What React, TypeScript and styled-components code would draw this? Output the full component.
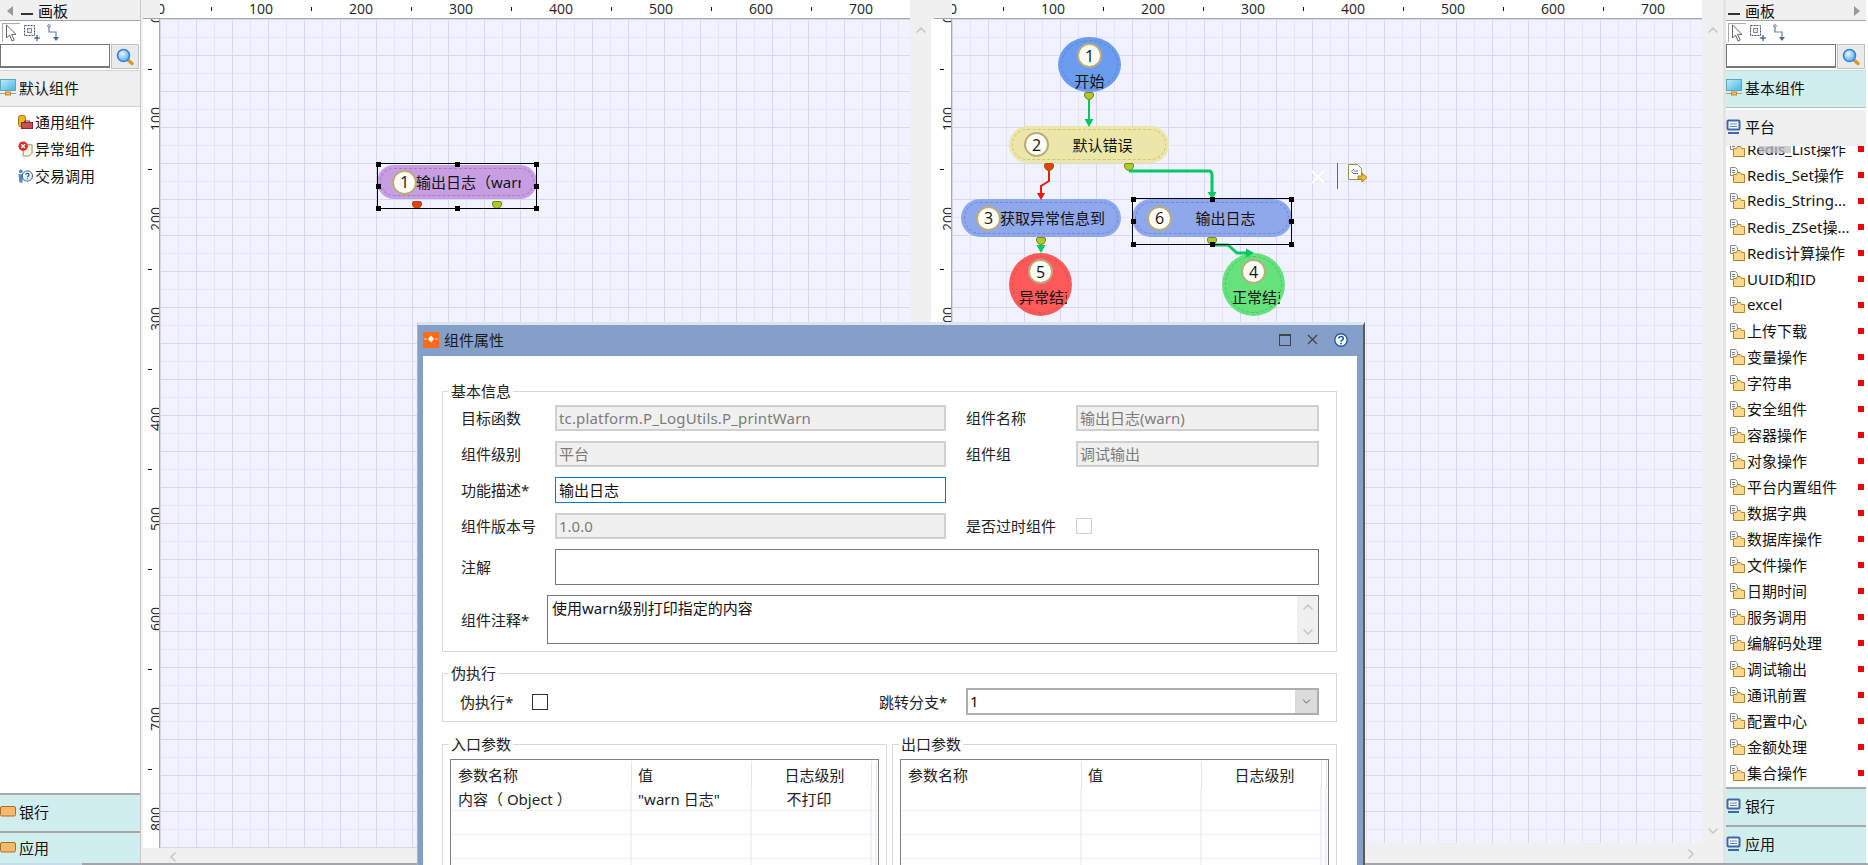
import React from "react";
import styled, { createGlobalStyle } from "styled-components";
import { ChevronDown, ChevronLeft, ChevronRight, ChevronUp } from "lucide-react";

const GlobalStyle = createGlobalStyle`
  html, body {
    margin: 0;
    padding: 0;
    background: #ffffff;
  }
  * {
    box-sizing: border-box;
  }
`;

const FONT = `"Noto Sans", "Noto Sans CJK SC", sans-serif`;

const Screen = styled.div`
  position: relative;
  display: flex;
  width: 1868px;
  height: 865px;
  overflow: hidden;
  font-family: ${FONT};
  font-size: 15px;
  color: #111;
  background: #ffffff;
`;

const WindowEdge = styled.div`
  position: absolute;
  left: 0;
  right: 0;
  bottom: 0;
  height: 2px;
  background: linear-gradient(to right, #c8dcec 82px, #a2a6aa 82px);
`;

/* ---------- palette ---------- */

const Palette = styled.aside<{ $width: number; $right?: boolean }>`
  display: flex;
  flex-direction: column;
  flex: none;
  width: ${(p) => p.$width}px;
  height: 865px;
  background: #fff;
  ${(p) =>
    p.$right
      ? `border-left: 3px solid #e4e4e4; padding-right: 2px; padding-bottom: 2px;`
      : `border-right: 1px solid #c8c8c8;`}
`;

const PaletteHead = styled.div`
  display: flex;
  align-items: center;
  gap: 5px;
  flex: none;
  height: 21px;
  padding: 2px 6px 0 2px;
  background: #f0f0f0;
  border-bottom: 1px solid #a6a6a6;
  line-height: 19px;
`;

const Minimize = styled.span`
  width: 12px;
  height: 2px;
  margin-top: 6px;
  background: #333;
`;

const CollapseArrow = styled.span<{ $dir: "left" | "right" }>`
  flex: none;
  width: 0;
  height: 0;
  ${(p) => (p.$dir === "right" ? "margin-left: auto;" : "margin: 0 3px 0 5px;")}
  border-top: 5px solid transparent;
  border-bottom: 5px solid transparent;
  ${(p) => (p.$dir === "right" ? "border-left: 6px solid #999;" : "border-right: 6px solid #999;")}
`;

const ToolRow = styled.div`
  display: flex;
  align-items: center;
  gap: 3px;
  flex: none;
  height: 23px;
  padding: 0 0 0 2px;
`;

const ToolButton = styled.span<{ $on?: boolean }>`
  display: flex;
  align-items: center;
  justify-content: center;
  width: 18px;
  height: 19px;
  ${(p) => p.$on && "border-top: 1px solid #aaa; border-left: 1px solid #aaa;"}
`;

const SearchRow = styled.div`
  display: flex;
  flex: none;
  gap: 1px;
  height: 27px;
  border-bottom: 1px solid #d4d4d4;
`;

const SearchInput = styled.div`
  width: 110px;
  height: 24px;
  border: 1px solid #777;
  border-bottom-width: 2px;
  border-right-width: 1px;
  background: #fff;
`;

const SearchButton = styled.div`
  display: flex;
  align-items: center;
  justify-content: center;
  width: 28px;
  height: 25px;
  background: #eaeaea;
  border: 1px solid #c0c0c0;
`;

const Drawer = styled.div<{ $open?: boolean; $height: number; $rule?: boolean }>`
  display: flex;
  align-items: center;
  gap: 3px;
  flex: none;
  height: ${(p) => p.$height}px;
  padding-bottom: 3px;
  background: ${(p) => (p.$open ? "#d0eeee" : "#efefef")};
  ${(p) => p.$rule && "border-top: 2px solid #a8a8a8;"}
`;

const DrawerGap = styled.div`
  flex: none;
  height: 3px;
  background: #fff;
  border-top: 1px solid #b8b8b8;
`;

const PlainRule = styled.div`
  flex: none;
  height: 1px;
  background: #d0d0d0;
`;

const TreeList = styled.div`
  flex: 1;
  min-height: 0;
  padding-top: 1px;
`;

const TreeItem = styled.div`
  display: flex;
  align-items: center;
  gap: 2px;
  height: 27px;
  padding-left: 18px;
  svg {
    flex: none;
    width: 15px;
  }
`;

const FolderList = styled.div`
  position: relative;
  flex: 1;
  min-height: 0;
  overflow: hidden;
`;

const FolderRows = styled.div`
  margin-top: -10px;
`;

const FolderRow = styled.div`
  display: flex;
  align-items: center;
  gap: 2px;
  height: 26px;
  padding-left: 4px;
  white-space: nowrap;
`;

const FolderName = styled.span`
  margin-top: -2px;
`;

const RedFlag = styled.span`
  flex: none;
  width: 6px;
  height: 6px;
  margin-left: auto;
  margin-right: 2px;
  background: #f00000;
`;

const ListShade = styled.div`
  position: absolute;
  left: 33px;
  top: 0;
  width: 32px;
  height: 7px;
  background: rgba(190, 190, 190, 0.75);
`;

/* ---------- canvas panes ---------- */

const Pane = styled.section<{ $width: number; $rulerW: number; $barH: number }>`
  display: grid;
  flex: none;
  width: ${(p) => p.$width}px;
  height: 865px;
  grid-template-columns: ${(p) => p.$rulerW}px 750px 21px;
  grid-template-rows: 19px 1fr ${(p) => p.$barH}px;
  background: #f0f0f0;
`;

const Corner = styled.div<{ $inset: number }>`
  margin-left: ${(p) => p.$inset}px;
  background: #f0f0f0;
  border-bottom: 1px solid #a8a8a8;
`;

const RulerTop = styled.div`
  position: relative;
  overflow: hidden;
  background: #fff;
  border-bottom: 1px solid #a8a8a8;
`;

const RulerLeft = styled.div<{ $inset: number }>`
  position: relative;
  overflow: hidden;
  margin-left: ${(p) => p.$inset}px;
  background: #fff;
  border-right: 1px solid #a8a8a8;
`;

const TopLabel = styled.span<{ $at: number }>`
  position: absolute;
  top: 0;
  left: ${(p) => p.$at + 1}px;
  transform: translateX(-50%);
  font: 14px/17px "Open Sans", sans-serif;
  color: #222;
`;

const TopTick = styled.span<{ $at: number }>`
  position: absolute;
  top: 7px;
  left: ${(p) => p.$at + 1}px;
  width: 1px;
  height: 4px;
  background: #111;
`;

const SideLabel = styled.span<{ $at: number }>`
  position: absolute;
  left: calc(100% - 4px);
  top: ${(p) => p.$at}px;
  transform: translate(-50%, -50%) rotate(-90deg);
  font: 14px/17px "Open Sans", sans-serif;
  color: #222;
`;

const SideTick = styled.span<{ $at: number }>`
  position: absolute;
  right: 7px;
  top: ${(p) => p.$at}px;
  width: 4px;
  height: 1px;
  background: #111;
`;

const Canvas = styled.div`
  position: relative;
  overflow: hidden;
  background-color: #f0f2ff;
  background-image: linear-gradient(to right, #d6d7f6 1px, transparent 1px),
    linear-gradient(to bottom, #d6d7f6 1px, transparent 1px),
    linear-gradient(to right, #e3e5fb 1px, transparent 1px),
    linear-gradient(to bottom, #e3e5fb 1px, transparent 1px);
  background-size: 36px 36px, 36px 36px, 18px 18px, 18px 18px;
`;

const VScroll = styled.div`
  grid-column: 3;
  grid-row: 1 / 3;
  display: flex;
  flex-direction: column;
  align-items: center;
  justify-content: space-between;
  padding: 22px 0 4px;
  color: #c8c8c8;
`;

const HScroll = styled.div<{ $end?: boolean }>`
  grid-column: 1 / 4;
  display: flex;
  align-items: center;
  padding: 0 24px;
  justify-content: ${(p) => (p.$end ? "flex-end" : "flex-start")};
  color: #c8c8c8;
`;

const Wires = styled.svg`
  position: absolute;
  left: 0;
  top: 0;
  width: 100%;
  height: 100%;
  pointer-events: none;
`;

const Pill = styled.div<{ $x: number; $y: number; $h: number; $bg: string; $dash: string }>`
  position: absolute;
  left: ${(p) => p.$x}px;
  top: ${(p) => p.$y}px;
  display: flex;
  align-items: center;
  width: 160px;
  height: ${(p) => p.$h}px;
  padding-left: 15px;
  border-radius: ${(p) => p.$h / 2}px;
  background: ${(p) => p.$bg};
  &::before {
    content: "";
    position: absolute;
    inset: 3px;
    border: 1px dashed ${(p) => p.$dash};
    border-radius: ${(p) => p.$h / 2 - 3}px;
  }
`;

const PillLabel = styled.span<{ $nudge?: number }>`
  position: relative;
  flex: none;
  width: 105px;
  margin-left: -1px;
  padding-left: ${(p) => p.$nudge ?? 0}px;
  overflow: hidden;
  white-space: nowrap;
  text-align: center;
  line-height: 20px;
`;

const Round = styled.div<{ $x: number; $y: number; $h: number; $bg: string; $dash: string }>`
  position: absolute;
  left: ${(p) => p.$x}px;
  top: ${(p) => p.$y}px;
  display: flex;
  flex-direction: column;
  align-items: center;
  gap: 3px;
  width: 63px;
  height: ${(p) => p.$h}px;
  padding-top: 6px;
  border-radius: 50%;
  background: ${(p) => p.$bg};
  &::before {
    content: "";
    position: absolute;
    inset: 3px;
    border: 1px dashed ${(p) => p.$dash};
    border-radius: 50%;
  }
`;

const RoundLabel = styled.span<{ $clip?: boolean }>`
  position: relative;
  display: block;
  width: 48px;
  ${(p) => p.$clip && "margin-left: 5px;"}
  overflow: hidden;
  white-space: nowrap;
  text-align: center;
  line-height: 20px;
`;

const Badge = styled.span`
  position: relative;
  flex: none;
  display: flex;
  align-items: center;
  justify-content: center;
  width: 25px;
  height: 25px;
  border-radius: 50%;
  background: #fffff6;
  border: 2px solid #b9ad7c;
  font: 16px/1 "Open Sans", sans-serif;
  color: #111;
`;

const Port = styled.span<{ $x: number; $y: number; $kind: "ok" | "err" }>`
  position: absolute;
  left: ${(p) => p.$x}px;
  top: ${(p) => p.$y}px;
  width: 10px;
  height: 8px;
  border-radius: 2px 2px 5px 5px;
  background: ${(p) => (p.$kind === "ok" ? "#a8cc20" : "#e04400")};
  border: 1px solid ${(p) => (p.$kind === "ok" ? "#8a7a30" : "#a8501c")};
`;

const SelectBox = styled.div<{ $x: number; $y: number; $w: number; $h: number }>`
  position: absolute;
  left: ${(p) => p.$x}px;
  top: ${(p) => p.$y}px;
  width: ${(p) => p.$w}px;
  height: ${(p) => p.$h}px;
  border: 1px solid #000;
`;

const Handle = styled.span<{ $left: string; $top: string }>`
  position: absolute;
  left: ${(p) => p.$left};
  top: ${(p) => p.$top};
  width: 5px;
  height: 5px;
  margin: -2.5px 0 0 -2.5px;
  background: #000;
`;

/* ---------- dialog ---------- */

const Dialog = styled.div`
  position: absolute;
  left: 417px;
  top: 322px;
  display: flex;
  flex-direction: column;
  width: 948px;
  height: 543px;
  padding: 0 6px;
  background: #84a0c8;
  border-top: 3px solid #dce4f0;
  border-left: 1px solid #a8b4c4;
  border-right: 2px solid #5a5a5a;
`;

const TitleBar = styled.div`
  display: flex;
  align-items: center;
  gap: 5px;
  flex: none;
  height: 31px;
  padding: 0 9px 2px 0;
  margin-left: -1px;
`;

const TitleText = styled.span`
  line-height: 20px;
  color: #1a1a1a;
`;

const TitleActions = styled.div`
  display: flex;
  align-items: center;
  gap: 16px;
  margin-left: auto;
`;

const DialogBody = styled.div`
  flex: 1;
  min-height: 0;
  overflow: hidden;
  padding: 25px 20px 0 19px;
  margin-left: -1px;
  background: #fff;
`;

const Group = styled.fieldset<{ $gapTop?: number }>`
  min-width: 0;
  margin: ${(p) => p.$gapTop ?? 0}px 0 0;
  padding: 0;
  border: 1px solid #d8d8d8;
`;

const GroupTitle = styled.legend`
  margin-left: 6px;
  padding: 0 2px;
  line-height: 20px;
  color: #222;
`;

const InfoGrid = styled.div`
  display: grid;
  grid-template-columns: 94px 391px 130px 243px;
  grid-template-rows: 26px 26px 26px 26px 36px 49px;
  row-gap: 10px;
  padding: 4px 0 7px 17px;
  margin-left: 1px;
  align-items: center;
`;

const FieldLabel = styled.label<{ $indent?: number }>`
  padding-left: ${(p) => p.$indent ?? 0}px;
  line-height: 20px;
  color: #222;
  white-space: nowrap;
`;

const Field = styled.div<{ $focus?: boolean; $wide?: boolean }>`
  height: 26px;
  padding-left: 2px;
  line-height: 22px;
  white-space: nowrap;
  ${(p) => p.$wide && "letter-spacing: 0.16px;"}
  ${(p) =>
    p.$focus
      ? `border: 1px solid #0078d7; background: #fff; color: #111; padding-left: 3px; line-height: 24px;`
      : `border: 2px solid #d0d0d0; background: #f0f0f0; color: #7c7c7c;`}
`;

const GhostBox = styled.div`
  width: 16px;
  height: 16px;
  border: 1px solid #d0d0d0;
  background: #fff;
`;

const NoteBox = styled.div`
  grid-column: 2 / 5;
  height: 36px;
  border: 1px solid #777;
  background: #fff;
`;

const MemoBox = styled.div`
  grid-column: 2 / 5;
  display: flex;
  justify-content: space-between;
  height: 49px;
  margin-left: -8px;
  border: 1px solid #777;
  background: #fff;
`;

const MemoText = styled.span`
  padding: 2px 0 0 4px;
  line-height: 20px;
`;

const MemoScroll = styled.div`
  display: flex;
  flex-direction: column;
  align-items: center;
  justify-content: space-between;
  width: 21px;
  padding: 3px 0;
  background: #f0f0f0;
  color: #c8c8c8;
`;

const RunRow = styled.div`
  display: grid;
  grid-template-columns: 72px 16px 1fr 87px 353px;
  align-items: center;
  padding: 5px 17px 6px 17px;
`;

const DarkBox = styled.div`
  width: 16px;
  height: 16px;
  border: 1px solid #333;
  background: #fff;
`;

const SelectField = styled.div`
  display: flex;
  justify-content: space-between;
  height: 27px;
  border: 2px solid #aeaeae;
  background: #fff;
`;

const SelectValue = styled.span`
  padding-left: 2px;
  line-height: 23px;
`;

const SelectArrow = styled.span`
  display: flex;
  align-items: center;
  justify-content: center;
  width: 22px;
  background: #dcdcdc;
  color: #444;
`;

const ParamColumns = styled.div`
  display: flex;
  gap: 5px;
  margin-top: 12px;
`;

const ParamGroup = styled(Group)`
  flex: 1;
  height: 200px;
  padding: 5px 7px 0;
  ${GroupTitle} {
    margin-left: -1px;
  }
`;

const ParamTable = styled.table`
  width: 429px;
  table-layout: fixed;
  border-collapse: separate;
  border-spacing: 0;
  border: 1px solid #7e8088;
  padding: 1px;
  font-size: 15px;
`;

const HeadCell = styled.th<{ $center?: boolean }>`
  height: 26px;
  padding: 0 0 0 6px;
  font-weight: 400;
  text-align: ${(p) => (p.$center ? "center" : "left")};
  border-right: 1px solid #e6e6e6;
  color: #222;
`;

const BodyCell = styled.td<{ $center?: boolean }>`
  height: 24px;
  padding: 0 ${(p) => (p.$center ? "4px" : "0")} 0 ${(p) => (p.$center ? "0" : "6px")};
  text-align: ${(p) => (p.$center ? "center" : "left")};
  border-right: 2px solid #f0f0f6;
  border-bottom: 1px solid #f0f0f4;
  white-space: nowrap;
  color: #222;
`;

/* ---------- icons ---------- */

const ArrowTool = () => (
  <svg width="13" height="18" viewBox="0 0 13 18">
    <path d="M1.5 1v13l3-3 2.5 6 2.2-1-2.5-5.6H11z" fill="#fff" stroke="#666" />
  </svg>
);

const MarqueeTool = () => (
  <svg width="17" height="18" viewBox="0 0 17 18">
    <rect x="0.5" y="1.5" width="10" height="10" fill="none" stroke="#2d4f8a" strokeDasharray="2 1" />
    <rect x="3.5" y="4.5" width="4" height="4" fill="#e8ecf4" stroke="#8a8a8a" />
    <path d="M13 11v6M10 14h6" stroke="#1c3a6e" strokeWidth="1" />
  </svg>
);

const LinkTool = () => (
  <svg width="13" height="18" viewBox="0 0 13 18">
    <path d="M2 2v6h7v6" fill="none" stroke="#6a7f9a" strokeWidth="1.2" />
    <circle cx="2" cy="2" r="1.3" fill="#fff" stroke="#6a7f9a" />
    <path d="M6 13h6l-3 4z" fill="#4a6a8e" />
  </svg>
);

const LensIcon = () => (
  <svg width="18" height="18" viewBox="0 0 18 18">
    <defs>
      <radialGradient id="lensFill" cx="0.4" cy="0.35" r="0.7">
        <stop offset="0" stopColor="#e8f6ff" />
        <stop offset="1" stopColor="#52a8f0" />
      </radialGradient>
    </defs>
    <path d="M12 12l4 3.5" stroke="#d8962c" strokeWidth="3.4" strokeLinecap="round" />
    <circle cx="7.5" cy="7.5" r="6" fill="url(#lensFill)" stroke="#2f86e0" strokeWidth="1.6" />
  </svg>
);

const ScreenIcon = () => (
  <svg width="16" height="17" viewBox="0 0 16 17">
    <defs>
      <linearGradient id="screenFill" x1="0" y1="0" x2="1" y2="1">
        <stop offset="0" stopColor="#bdeefa" />
        <stop offset="1" stopColor="#48b4dc" />
      </linearGradient>
    </defs>
    <rect x="0.5" y="0.5" width="15" height="11" fill="url(#screenFill)" stroke="#58a8cc" />
    <path d="M0 14.5h16" stroke="#b89a8a" />
    <rect x="5.5" y="13" width="5" height="3" fill="#f4c070" stroke="#d08020" />
  </svg>
);

const MonitorIcon = () => (
  <svg width="16" height="16" viewBox="0 0 16 16">
    <rect x="1.5" y="1.5" width="12" height="9" rx="1" fill="#fff" stroke="#3a68a8" strokeWidth="2" />
    <path d="M4 5h7M4 7.5h7" stroke="#5a88c0" />
    <path d="M2 13h11v2H2z" fill="#3a68a8" />
  </svg>
);

const TrayIcon = () => (
  <svg width="16" height="11" viewBox="0 0 16 11">
    <rect x="0.5" y="0.5" width="15" height="9.5" rx="1.5" fill="#f4b870" stroke="#b07018" />
  </svg>
);

const ToolboxIcon = () => (
  <svg width="15" height="14" viewBox="0 0 15 14">
    <rect x="0.5" y="0.5" width="7" height="11" rx="2" fill="#eab828" stroke="#a07808" />
    <rect x="3.5" y="7.5" width="11" height="6" fill="#c85050" stroke="#8a2a2a" />
    <path d="M6.5 7.5V6h5v1.500" fill="none" stroke="#8a2a2a" />
  </svg>
);

const FaultIcon = () => (
  <svg width="16" height="16" viewBox="0 0 16 16">
    <path d="M5.500 3.500h9.500v9l-3 3h-6.500z" fill="#f8f4dc" stroke="#8a8a60" />
    <circle cx="5.500" cy="5" r="5" fill="#e02828" />
    <path d="M3.500 3l4 4M7.500 3l-4 4" stroke="#fff" strokeWidth="1.400" />
  </svg>
);

const CallIcon = () => (
  <svg width="16" height="14" viewBox="0 0 16 14">
    <circle cx="3" cy="2" r="2" fill="#5a8abc" />
    <path d="M0.500 5h4.500v9H1.500z" fill="#5a8abc" />
    <circle cx="10" cy="7" r="5.500" fill="#eef4fa" stroke="#2a5a98" />
    <path d="M8.200 5.600c.3-1.900 3.600-1.900 3.600 0 0 1.400-1.800 1.400-1.800 2.800M10 9.400v1" fill="none" stroke="#2a5a98" strokeWidth="1.200" />
  </svg>
);

const FolderDocIcon = () => (
  <svg width="15" height="16" viewBox="0 0 15 16" style={{ flex: "none" }}>
    <path d="M0.500 0.500h5l2 2v6h-7z" fill="#f4f4f4" stroke="#8a8a8a" />
    <path d="M2 3.500h3M2 5.500h3" stroke="#6a88c0" />
    <path d="M3.500 7.500h3l1-2h3l1 2h3v8h-11z" fill="#f8d88c" stroke="#b08430" />
  </svg>
);

const OrangeDiamond = () => (
  <svg width="16" height="16" viewBox="0 0 16 16">
    <rect width="16" height="16" fill="#ff6a14" />
    <path d="M8 3.500l3 3.500-3 3.500-3-3.500z" fill="#fff" />
    <path d="M1 7h3M12 7h3" stroke="#ffd8b8" />
  </svg>
);

const MaxIcon = () => (
  <svg width="12" height="12" viewBox="0 0 12 12">
    <rect x="0.500" y="1" width="11" height="10.500" fill="none" stroke="#444" />
    <path d="M0 1h12" stroke="#444" strokeWidth="2" />
  </svg>
);

const CloseIcon = () => (
  <svg width="11" height="11" viewBox="0 0 11 11">
    <path d="M1 1l9 9M10 1l-9 9" stroke="#444" strokeWidth="1.300" />
  </svg>
);

const HelpIcon = () => (
  <svg width="14" height="14" viewBox="0 0 14 14">
    <circle cx="7" cy="7" r="6.200" fill="#fff" stroke="#1c5ca8" strokeWidth="1.400" />
    <path d="M4.800 5.500c.2-2.700 4.500-2.700 4.500 0 0 1.800-2.300 1.600-2.300 3.300M7 9.800v1.400" fill="none" stroke="#1c5ca8" strokeWidth="1.600" />
  </svg>
);

const GREEN = "#00c864";
const RED = "#f01414";

const ExportMark = () => (
  <g transform="translate(396 145)">
    <path d="M0.500 0.500h9l4 4v11H0.500z" fill="#fff" stroke="#a88a4a" />
    <path d="M6 5l-2.500 2.500L6 10M6 7h4M6 9.500h4" fill="none" stroke="#5a7a9a" />
    <path d="M10 12h4v-3l5 4.500-5 4.500v-3h-4z" fill="#f0c038" stroke="#b08020" />
  </g>
);

/* ---------- data ---------- */

const COLUMN_LABELS = [0, 100, 200, 300, 400, 500, 600, 700];
const COLUMN_TICKS = [50, 150, 250, 350, 450, 550, 650, 750];
const ROW_LABELS = [0, 100, 200, 300, 400, 500, 600, 700, 800];
const ROW_TICKS = [50, 150, 250, 350, 450, 550, 650, 750];

const FOLDERS = [
  "Redis_List操作",
  "Redis_Set操作",
  "Redis_String...",
  "Redis_ZSet操...",
  "Redis计算操作",
  "UUID和ID",
  "excel",
  "上传下载",
  "变量操作",
  "字符串",
  "安全组件",
  "容器操作",
  "对象操作",
  "平台内置组件",
  "数据字典",
  "数据库操作",
  "文件操作",
  "日期时间",
  "服务调用",
  "编解码处理",
  "调试输出",
  "通讯前置",
  "配置中心",
  "金额处理",
  "集合操作",
];

const HANDLE_SPOTS: [string, string][] = [
  ["0", "0"],
  ["50%", "0"],
  ["100%", "0"],
  ["0", "50%"],
  ["100%", "50%"],
  ["0", "100%"],
  ["50%", "100%"],
  ["100%", "100%"],
];

const BLANK_ROW: [string, string, string] = ["", "", ""];

/* ---------- parts ---------- */

const Rulers: React.FC<{ inset: number }> = ({ inset }) => (
  <>
    <Corner $inset={inset} />
    <RulerTop>
      {COLUMN_LABELS.map((v) => (
        <TopLabel key={v} $at={v}>
          {v}
        </TopLabel>
      ))}
      {COLUMN_TICKS.map((v) => (
        <TopTick key={v} $at={v} />
      ))}
    </RulerTop>
  </>
);

const SideRuler: React.FC<{ inset: number }> = ({ inset }) => (
  <RulerLeft $inset={inset}>
    {ROW_LABELS.map((v) => (
      <SideLabel key={v} $at={v}>
        {v}
      </SideLabel>
    ))}
    {ROW_TICKS.map((v) => (
      <SideTick key={v} $at={v} />
    ))}
  </RulerLeft>
);

const Selection: React.FC<{ x: number; y: number; w: number; h: number }> = ({ x, y, w, h }) => (
  <SelectBox $x={x} $y={y} $w={w} $h={h}>
    {HANDLE_SPOTS.map(([l, t]) => (
      <Handle key={l + t} $left={l} $top={t} />
    ))}
  </SelectBox>
);

const Tools = () => (
  <>
    <ToolRow>
      <ToolButton $on>
        <ArrowTool />
      </ToolButton>
      <ToolButton>
        <MarqueeTool />
      </ToolButton>
      <ToolButton>
        <LinkTool />
      </ToolButton>
    </ToolRow>
    <SearchRow>
      <SearchInput />
      <SearchButton>
        <LensIcon />
      </SearchButton>
    </SearchRow>
  </>
);

const LeftPalette = () => (
  <Palette $width={141}>
    <PaletteHead>
      <CollapseArrow $dir="left" />
      <Minimize />
      <span>画板</span>
    </PaletteHead>
    <Tools />
    <Drawer $height={35}>
      <ScreenIcon />
      默认组件
    </Drawer>
    <PlainRule />
    <TreeList>
      <TreeItem>
        <ToolboxIcon />
        通用组件
      </TreeItem>
      <TreeItem>
        <FaultIcon />
        异常组件
      </TreeItem>
      <TreeItem>
        <CallIcon />
        交易调用
      </TreeItem>
    </TreeList>
    <Drawer $open $rule $height={38}>
      <TrayIcon />
      银行
    </Drawer>
    <Drawer $open $rule $height={34}>
      <TrayIcon />
      应用
    </Drawer>
  </Palette>
);

const RightPalette = () => (
  <Palette $width={145} $right>
    <PaletteHead>
      <Minimize />
      <span>画板</span>
      <CollapseArrow $dir="right" />
    </PaletteHead>
    <Tools />
    <Drawer $open $height={36}>
      <ScreenIcon />
      基本组件
    </Drawer>
    <DrawerGap />
    <Drawer $height={36}>
      <MonitorIcon />
      平台
    </Drawer>
    <FolderList>
      <FolderRows>
        {FOLDERS.map((name) => (
          <FolderRow key={name}>
            <FolderDocIcon />
            <FolderName>{name}</FolderName>
            <RedFlag />
          </FolderRow>
        ))}
      </FolderRows>
      <ListShade />
    </FolderList>
    <Drawer $open $rule $height={38}>
      <MonitorIcon />
      银行
    </Drawer>
    <Drawer $open $rule $height={38}>
      <MonitorIcon />
      应用
    </Drawer>
  </Palette>
);

const LeftCanvasPane = () => (
  <Pane $width={790} $rulerW={19} $barH={17}>
    <Rulers inset={2} />
    <VScroll>
      <ChevronUp size={16} strokeWidth={2.5} />
      <span />
    </VScroll>
    <SideRuler inset={2} />
    <Canvas>
      <Pill $x={217} $y={146} $h={34} $bg="#c89ee2" $dash="#a87ac8">
        <Badge>1</Badge>
        <PillLabel>输出日志（warn）</PillLabel>
      </Pill>
      <Port $kind="err" $x={252} $y={182} />
      <Port $kind="ok" $x={332} $y={182} />
      <Selection x={217} y={144} w={160} h={46} />
    </Canvas>
    <HScroll>
      <ChevronLeft size={16} strokeWidth={2.5} />
    </HScroll>
  </Pane>
);

const RightCanvasPane = () => (
  <Pane $width={792} $rulerW={21} $barH={22}>
    <Rulers inset={3} />
    <VScroll>
      <ChevronUp size={16} strokeWidth={2.5} />
      <ChevronDown size={16} strokeWidth={2.5} />
    </VScroll>
    <SideRuler inset={0} />
    <Canvas>
      <Round $x={106} $y={18} $h={55} $bg="#6a9cf0" $dash="#5a86c8">
        <Badge>1</Badge>
        <RoundLabel>开始</RoundLabel>
      </Round>
      <Pill $x={57} $y={107} $h={37} $bg="#ece6a8" $dash="#cfc676">
        <Badge>2</Badge>
        <PillLabel $nudge={4}>默认错误</PillLabel>
      </Pill>
      <Pill $x={9} $y={180} $h={38} $bg="#8fa8ec" $dash="#6f88d8">
        <Badge>3</Badge>
        <PillLabel>获取异常信息到</PillLabel>
      </Pill>
      <Pill $x={180} $y={180} $h={38} $bg="#8fa8ec" $dash="#6f88d8">
        <Badge>6</Badge>
        <PillLabel $nudge={4}>输出日志</PillLabel>
      </Pill>
      <Round $x={57} $y={234} $h={63} $bg="#ff5a5a" $dash="#d85050">
        <Badge>5</Badge>
        <RoundLabel $clip>异常结束</RoundLabel>
      </Round>
      <Round $x={270} $y={234} $h={63} $bg="#66e27c" $dash="#4cc066">
        <Badge>4</Badge>
        <RoundLabel $clip>正常结束</RoundLabel>
      </Round>
      <Port $kind="ok" $x={132} $y={73} />
      <Port $kind="err" $x={92} $y={144} />
      <Port $kind="ok" $x={172} $y={144} />
      <Port $kind="ok" $x={84} $y={218} />
      <Port $kind="ok" $x={255} $y={218} />
      <Wires>
        <path d="M137 81v20" fill="none" stroke={GREEN} strokeWidth="2" />
        <path d="M132.500 100h9l-4.500 8z" fill={GREEN} />
        <path d="M97 152v10l-8 5v8" fill="none" stroke={RED} strokeWidth="2" />
        <path d="M85 174h8l-4 7z" fill={RED} />
        <path d="M177 152h80q3 0 3 4v18" fill="none" stroke={GREEN} strokeWidth="3" />
        <path d="M255.500 173h9l-4.500 7z" fill={GREEN} />
        <path d="M84.500 226h9l-4.500 8z" fill={GREEN} />
        <path d="M263 226h13l9 8h10" fill="none" stroke={GREEN} strokeWidth="3" />
        <path d="M294 229.500v9l8-4.500z" fill={GREEN} />
        <path d="M360 152l12 12M372 152l-12 12" stroke="#fff" strokeWidth="2" />
        <path d="M385.500 144v26" stroke="#666" />
        <ExportMark />
      </Wires>
      <Selection x={180} y={179} w={160} h={47} />
    </Canvas>
    <HScroll $end>
      <ChevronRight size={16} strokeWidth={2.5} />
    </HScroll>
  </Pane>
);

const ParamGrid: React.FC<{ title: string; rows: [string, string, string][] }> = ({ title, rows }) => (
  <ParamGroup>
    <GroupTitle>{title}</GroupTitle>
    <ParamTable>
      <colgroup>
        <col width="180" />
        <col width="120" />
        <col width="120" />
        <col />
      </colgroup>
      <thead>
        <tr>
          <HeadCell>参数名称</HeadCell>
          <HeadCell>值</HeadCell>
          <HeadCell $center>日志级别</HeadCell>
          <HeadCell />
        </tr>
      </thead>
      <tbody>
        {rows.map((r, i) => (
          <tr key={i}>
            <BodyCell>{r[0]}</BodyCell>
            <BodyCell>{r[1]}</BodyCell>
            <BodyCell $center>{r[2]}</BodyCell>
            <BodyCell />
          </tr>
        ))}
      </tbody>
    </ParamTable>
  </ParamGroup>
);

const PropertiesDialog = () => (
  <Dialog>
    <TitleBar>
      <OrangeDiamond />
      <TitleText>组件属性</TitleText>
      <TitleActions>
        <MaxIcon />
        <CloseIcon />
        <HelpIcon />
      </TitleActions>
    </TitleBar>
    <DialogBody>
      <Group>
        <GroupTitle>基本信息</GroupTitle>
        <InfoGrid>
          <FieldLabel>目标函数</FieldLabel>
          <Field $wide>tc.platform.P_LogUtils.P_printWarn</Field>
          <FieldLabel $indent={20}>组件名称</FieldLabel>
          <Field>输出日志(warn)</Field>

          <FieldLabel>组件级别</FieldLabel>
          <Field>平台</Field>
          <FieldLabel $indent={20}>组件组</FieldLabel>
          <Field>调试输出</Field>

          <FieldLabel>功能描述*</FieldLabel>
          <Field $focus>输出日志</Field>
          <span />
          <span />

          <FieldLabel>组件版本号</FieldLabel>
          <Field>1.0.0</Field>
          <FieldLabel $indent={20}>是否过时组件</FieldLabel>
          <GhostBox />

          <FieldLabel>注解</FieldLabel>
          <NoteBox />

          <FieldLabel>组件注释*</FieldLabel>
          <MemoBox>
            <MemoText>使用warn级别打印指定的内容</MemoText>
            <MemoScroll>
              <ChevronUp size={16} strokeWidth={2.5} />
              <ChevronDown size={16} strokeWidth={2.5} />
            </MemoScroll>
          </MemoBox>
        </InfoGrid>
      </Group>

      <Group $gapTop={11}>
        <GroupTitle>伪执行</GroupTitle>
        <RunRow>
          <FieldLabel>伪执行*</FieldLabel>
          <DarkBox />
          <span />
          <FieldLabel>跳转分支*</FieldLabel>
          <SelectField>
            <SelectValue>1</SelectValue>
            <SelectArrow>
              <ChevronDown size={13} strokeWidth={1.5} />
            </SelectArrow>
          </SelectField>
        </RunRow>
      </Group>

      <ParamColumns>
        <ParamGrid
          title="入口参数"
          rows={[["内容（ Object ）", '"warn 日志"', "不打印"], BLANK_ROW, BLANK_ROW, BLANK_ROW, BLANK_ROW]}
        />
        <ParamGrid title="出口参数" rows={[BLANK_ROW, BLANK_ROW, BLANK_ROW, BLANK_ROW, BLANK_ROW]} />
      </ParamColumns>
    </DialogBody>
  </Dialog>
);

export default function App() {
  return (
    <>
      <GlobalStyle />
      <Screen>
        <LeftPalette />
        <LeftCanvasPane />
        <RightCanvasPane />
        <RightPalette />
        <WindowEdge />
        <PropertiesDialog />
      </Screen>
    </>
  );
}
